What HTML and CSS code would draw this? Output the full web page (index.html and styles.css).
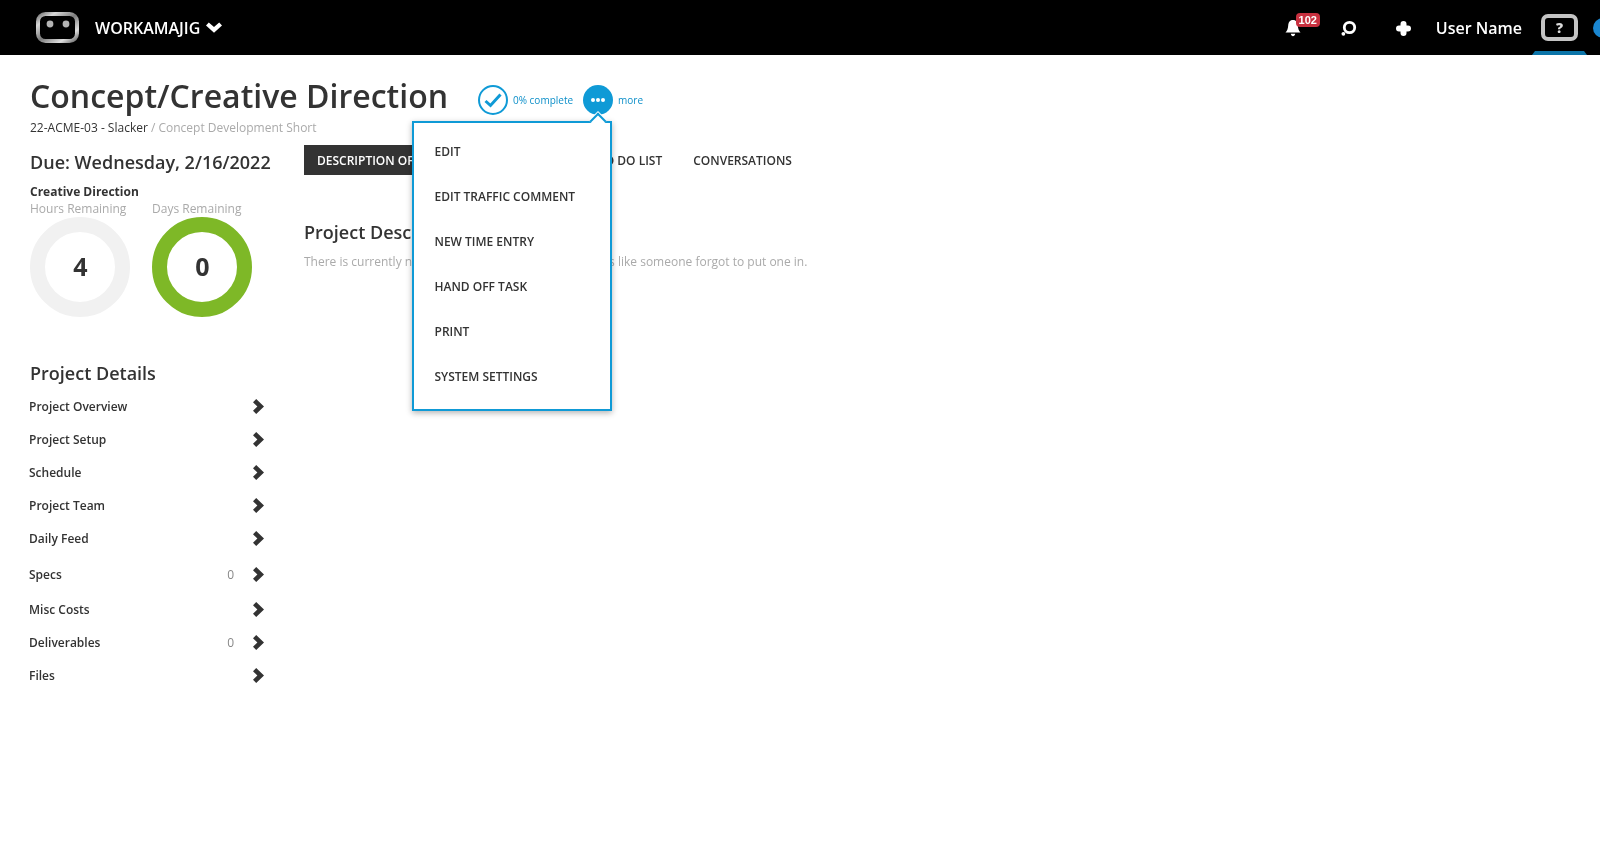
FILE: index.html
```html
<!DOCTYPE html>
<html lang="en">
<head>
<meta charset="utf-8">
<title>Concept/Creative Direction</title>
<link rel="stylesheet" href="styles.css">
</head>
<body>
<header class="topbar">
  <div class="brand">
    <svg class="logo" width="43" height="31" viewBox="0 0 43 31">
      <defs>
        <linearGradient id="chrome" x1="0" y1="0" x2="1" y2="1">
          <stop offset="0" stop-color="#777"/>
          <stop offset="0.2" stop-color="#d8d8d8"/>
          <stop offset="0.5" stop-color="#7c7c7c"/>
          <stop offset="0.8" stop-color="#dedede"/>
          <stop offset="1" stop-color="#6c6c6c"/>
        </linearGradient>
      </defs>
      <rect x="2" y="2" width="39" height="27" rx="7.5" fill="#000" stroke="url(#chrome)" stroke-width="4"/>
      <circle cx="14" cy="12" r="3.4" fill="#b4b4b4"/>
      <circle cx="30" cy="12" r="3.4" fill="#b4b4b4"/>
    </svg>
    <span class="brand-name">WORKAMAJIG</span>
    <svg class="brand-caret" width="16" height="11" viewBox="0 0 16 11"><path d="M2.8 0.4 L8 5 L13.2 0.4 L16 3.4 L8 10.8 L0 3.4 Z" fill="#fff"/></svg>
  </div>
  <div class="top-actions">
    <div class="bell">
      <svg width="16" height="18" viewBox="0 0 16 18"><path d="M8 1 C4.5 1 3.4 3.6 3.2 6.5 C3 10 2 12 0.5 13.6 L15.5 13.6 C14 12 13 10 12.8 6.5 C12.6 3.6 11.5 1 8 1 Z M5.8 14.8 C6 16.4 6.9 17.2 8 17.2 C9.1 17.2 10 16.4 10.2 14.8 Z" fill="#fff"/></svg>
      <span class="badge">102</span>
    </div>
    <svg class="search" width="17" height="17" viewBox="0 0 17 17"><circle cx="9.5" cy="7.5" r="5.2" fill="none" stroke="#fff" stroke-width="2.8"/><circle cx="3.4" cy="13.8" r="1.9" fill="#fff"/></svg>
    <svg class="plus" width="15" height="15" viewBox="0 0 15 15"><path d="M7.5 3 L7.5 12 M3 7.5 L12 7.5" fill="none" stroke="#fff" stroke-width="6" stroke-linecap="round"/></svg>
    <span class="user">User Name</span>
    <div class="help"><span class="help-box">?</span><span class="help-bar"></span></div>
    <span class="avatar"></span>
  </div>
</header>

<div class="page">
  <div class="title-row">
    <h1 class="title">Concept/Creative Direction</h1>
    <div class="status">
      <span class="check">
        <svg width="18" height="15" viewBox="0 0 18 15"><path d="M1.5 8 L6.5 12.5 L16.5 1.5" fill="none" stroke="#0f9ad6" stroke-width="3"/></svg>
      </span>
      <span class="status-label">0% complete</span>
      <span class="more-dot"><i></i><i></i><i></i></span>
      <span class="status-label">more</span>
    </div>
  </div>
  <p class="crumb">22-ACME-03 - Slacker <span class="crumb-muted">/ Concept Development Short</span></p>

  <div class="columns">
    <aside class="side">
      <div class="due">Due: Wednesday, 2/16/2022</div>
      <div class="dept">Creative Direction</div>
      <div class="gauges">
        <div class="gauge">
          <div class="gauge-label">Hours Remaining</div>
          <div class="ring">4</div>
        </div>
        <div class="gauge">
          <div class="gauge-label">Days Remaining</div>
          <div class="ring ring-green">0</div>
        </div>
      </div>
      <h2 class="side-head">Project Details</h2>
      <ul class="details">
        <li class="row"><span class="row-name">Project Overview</span><svg class="chev" viewBox="0 0 11 15"><path d="M3.2 0 L11 7.5 L3.2 15 L0 11.8 L4.4 7.5 L0 3.2 Z"/></svg></li>
        <li class="row"><span class="row-name">Project Setup</span><svg class="chev" viewBox="0 0 11 15"><path d="M3.2 0 L11 7.5 L3.2 15 L0 11.8 L4.4 7.5 L0 3.2 Z"/></svg></li>
        <li class="row"><span class="row-name">Schedule</span><svg class="chev" viewBox="0 0 11 15"><path d="M3.2 0 L11 7.5 L3.2 15 L0 11.8 L4.4 7.5 L0 3.2 Z"/></svg></li>
        <li class="row"><span class="row-name">Project Team</span><svg class="chev" viewBox="0 0 11 15"><path d="M3.2 0 L11 7.5 L3.2 15 L0 11.8 L4.4 7.5 L0 3.2 Z"/></svg></li>
        <li class="row"><span class="row-name">Daily Feed</span><svg class="chev" viewBox="0 0 11 15"><path d="M3.2 0 L11 7.5 L3.2 15 L0 11.8 L4.4 7.5 L0 3.2 Z"/></svg></li>
        <li class="row row-specs"><span class="row-name">Specs</span><span class="count">0</span><svg class="chev" viewBox="0 0 11 15"><path d="M3.2 0 L11 7.5 L3.2 15 L0 11.8 L4.4 7.5 L0 3.2 Z"/></svg></li>
        <li class="row row-misc"><span class="row-name">Misc Costs</span><svg class="chev" viewBox="0 0 11 15"><path d="M3.2 0 L11 7.5 L3.2 15 L0 11.8 L4.4 7.5 L0 3.2 Z"/></svg></li>
        <li class="row"><span class="row-name">Deliverables</span><span class="count">0</span><svg class="chev" viewBox="0 0 11 15"><path d="M3.2 0 L11 7.5 L3.2 15 L0 11.8 L4.4 7.5 L0 3.2 Z"/></svg></li>
        <li class="row"><span class="row-name">Files</span><svg class="chev" viewBox="0 0 11 15"><path d="M3.2 0 L11 7.5 L3.2 15 L0 11.8 L4.4 7.5 L0 3.2 Z"/></svg></li>
      </ul>
    </aside>
    <main class="main">
      <nav class="tabs">
        <span class="tab tab-active">DESCRIPTION OF WORK</span>
        <span class="tab tab-files">ATTACHMENTS</span>
        <span class="tab">TO DO LIST</span>
        <span class="tab">CONVERSATIONS</span>
      </nav>
      <h2 class="main-head">Project Description</h2>
      <p class="empty">There is currently no description for the project. It looks like someone forgot to put one in.</p>
    </main>
  </div>

  <div class="menu">
    <span class="menu-tip"></span>
    <a class="menu-item">EDIT</a>
    <a class="menu-item">EDIT TRAFFIC COMMENT</a>
    <a class="menu-item">NEW TIME ENTRY</a>
    <a class="menu-item">HAND OFF TASK</a>
    <a class="menu-item">PRINT</a>
    <a class="menu-item">SYSTEM SETTINGS</a>
  </div>
</div>
</body>
</html>
```
FILE: styles.css
```css
* { box-sizing: border-box; }
html, body { margin: 0; height: 100%; }
body {
  overflow: hidden;
  background: #fff;
  color: #333;
  font-family: "Open Sans", "Liberation Sans", sans-serif;
}

/* top bar */
.topbar {
  height: 55px;
  background: #000;
  color: #fff;
  display: flex;
  align-items: center;
  justify-content: space-between;
  will-change: transform;
}
.brand { display: flex; align-items: center; margin-left: 36px; }
.logo { display: block; margin-top: -1px; }
.brand-name { margin-left: 16px; font-size: 16px; font-weight: 600; }
.brand-caret { margin-left: 6px; }
.top-actions { display: flex; align-items: center; height: 55px; margin-right: -13px; }
.bell { position: relative; width: 16px; height: 18px; margin-top: 1px; }
.bell svg { display: block; }
.badge {
  position: absolute;
  left: 11px;
  top: -6px;
  width: 24px;
  height: 14px;
  border-radius: 4px;
  background: #c8303f;
  color: #fff;
  font-family: "Liberation Sans", sans-serif;
  font-size: 11px;
  font-weight: 700;
  line-height: 14px;
  text-align: center;
}
.search { margin-left: 39px; margin-top: 1px; }
.plus { margin-left: 39px; margin-top: 1px; }
.user { margin-left: 25px; font-size: 16px; font-weight: 600; }
.help { position: relative; width: 55px; height: 55px; margin-left: 10px; display: flex; justify-content: center; }
.help-box {
  width: 37px;
  height: 27px;
  margin-top: 14px;
  border: 4px solid #c4c4c4;
  border-radius: 7px;
  color: #ddd;
  font-size: 14px;
  font-weight: 800;
  line-height: 19px;
  text-align: center;
}
.help-bar {
  position: absolute;
  left: 0;
  right: 0;
  bottom: 0;
  height: 4px;
  background: #0b74a8;
  clip-path: polygon(3px 0, calc(100% - 3px) 0, 100% 100%, 0 100%);
}
.avatar { width: 20px; height: 20px; margin-left: 6px; border-radius: 50%; background: #1a86d0; }

/* page */
.page { position: relative; padding: 0 30px; will-change: transform; }
.title-row { display: flex; padding-top: 19px; }
.title { margin: 0; font-size: 32px; font-weight: 600; line-height: 43px; }
.status { display: flex; align-items: center; height: 30px; margin: 11px 0 0 30px; }
.check {
  width: 30px;
  height: 30px;
  display: flex;
  align-items: center;
  justify-content: center;
  border: 2px solid #0f9ad6;
  border-radius: 50%;
}
.status-label { margin-left: 5px; font-size: 10px; color: #0d8fc9; }
.more-dot {
  width: 30px;
  height: 30px;
  margin-left: 10px;
  display: flex;
  align-items: center;
  justify-content: center;
  gap: 1px;
  border-radius: 50%;
  background: #0f9ad6;
}
.more-dot i { width: 4px; height: 4px; border-radius: 50%; background: #fff; }
.crumb { margin: 3px 0 0; font-size: 12px; line-height: 16px; }
.crumb-muted { color: #aaa; }
.columns { display: flex; margin-top: 9px; }

/* side */
.side { width: 274px; flex: none; }
.due { font-size: 18px; font-weight: 600; line-height: 34px; }
.dept { margin-top: 5px; font-size: 12px; font-weight: 700; line-height: 16px; }
.gauges { display: flex; gap: 22px; margin-top: 1px; }
.gauge { width: 100px; }
.gauge-label { font-size: 12px; line-height: 16px; color: #aaa; white-space: nowrap; }
.ring {
  width: 100px;
  height: 100px;
  display: flex;
  align-items: center;
  justify-content: center;
  padding: 0 0 2px 1px;
  border: 15px solid #f1f1f1;
  border-radius: 50%;
  font-size: 25px;
  font-weight: 700;
}
.ring-green { border-color: #7eb827; }
.side-head { margin: 44px 0 5px; font-size: 18px; font-weight: 600; line-height: 24px; }
.details { margin: 0 0 0 -1px; padding: 0; list-style: none; width: 235px; }
.row { display: flex; align-items: center; height: 33px; font-size: 12px; font-weight: 600; }
.row-specs { margin-top: 3px; }
.row-misc { margin-top: 2px; }
.row-name { flex: 1; }
.count { margin-right: 19px; font-weight: 400; color: #888; }
.chev { width: 11px; height: 15px; fill: #333; }

/* main */
.main { flex: 1; }
.tabs { display: flex; gap: 5px; height: 30px; }
.tab { height: 30px; padding: 1px 13px 0; font-size: 12px; font-weight: 600; line-height: 30px; white-space: nowrap; }
.tab-active { background: #333; color: #fff; }
.tab-files { padding: 1px 10.5px 0 12px; }
.main-head { margin: 45px 0 0; font-size: 18px; font-weight: 600; line-height: 24px; }
.empty { margin: 9px 0 0; font-size: 12px; line-height: 18px; color: #aaa; }

/* menu */
.menu {
  position: absolute;
  left: 412px;
  top: 66px;
  width: 200px;
  height: 290px;
  padding-top: 6px;
  background: #fff;
  border: 2px solid #0f9ad6;
  box-shadow: 0 2px 6px rgba(0, 0, 0, 0.3);
}
.menu-tip {
  position: absolute;
  left: 178px;
  top: -8px;
  width: 12px;
  height: 12px;
  background: #fff;
  border-top: 2px solid #0f9ad6;
  border-left: 2px solid #0f9ad6;
  box-shadow: -1px -1px 0 #fff;
  transform: rotate(45deg);
}
.menu-item {
  display: block;
  height: 45px;
  padding-left: 20.5px;
  font-size: 12px;
  font-weight: 600;
  line-height: 45px;
}
```
